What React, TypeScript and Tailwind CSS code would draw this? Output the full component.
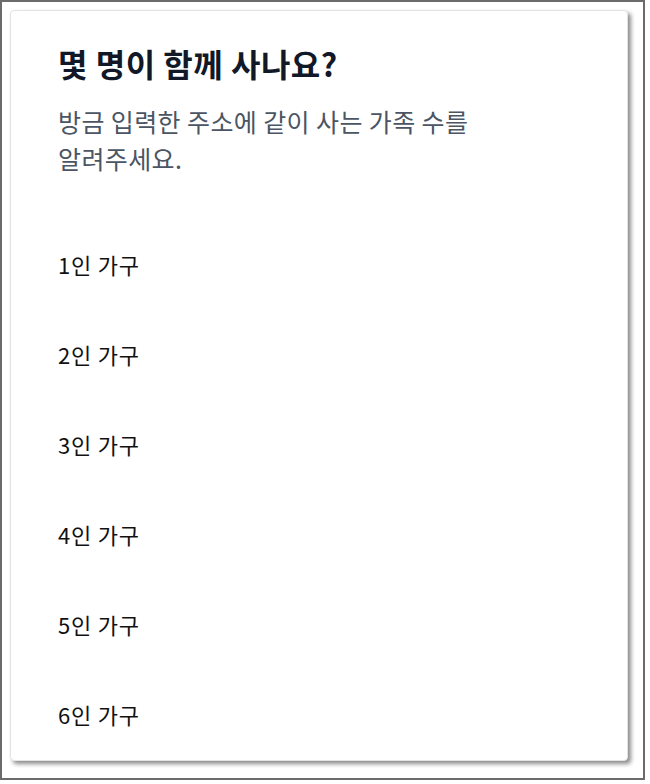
import React from "react";

const items = ["1인 가구", "2인 가구", "3인 가구", "4인 가구", "5인 가구", "6인 가구"];

export default function App() {
  return (
    <div
      className="w-[650px] h-[784px] bg-white"
      style={{ fontFamily: '"Noto Sans CJK KR", "Noto Sans", sans-serif' }}
    >
      <div className="w-[645px] h-[780px] border-2 border-[#6b6b6b] bg-white pl-[8px] pt-[8px]">
        <div className="w-[618px] h-[751px] rounded-[4px] border border-[#e3e3e3] bg-white shadow-[3px_3px_4px_rgba(0,0,0,0.45)] overflow-hidden pl-[47px] pt-[32px]">
          <h1 className="text-[32px] leading-[40px] font-bold text-[#111827] tracking-[0.5px]">
            몇 명이 함께 사나요?
          </h1>
          <p className="mt-[20px] text-[25px] leading-[37px] text-[#4b5563] tracking-[0.4px]">
            방금 입력한 주소에 같이 사는 가족 수를
            <br />
            알려주세요.
          </p>
          <ul className="mt-[42px] flex flex-col">
            {items.map((t) => (
              <li
                key={t}
                className="h-[90px] flex items-center text-[22px] text-[#111111] tracking-[0.8px]"
              >
                {t}
              </li>
            ))}
          </ul>
        </div>
      </div>
    </div>
  );
}
